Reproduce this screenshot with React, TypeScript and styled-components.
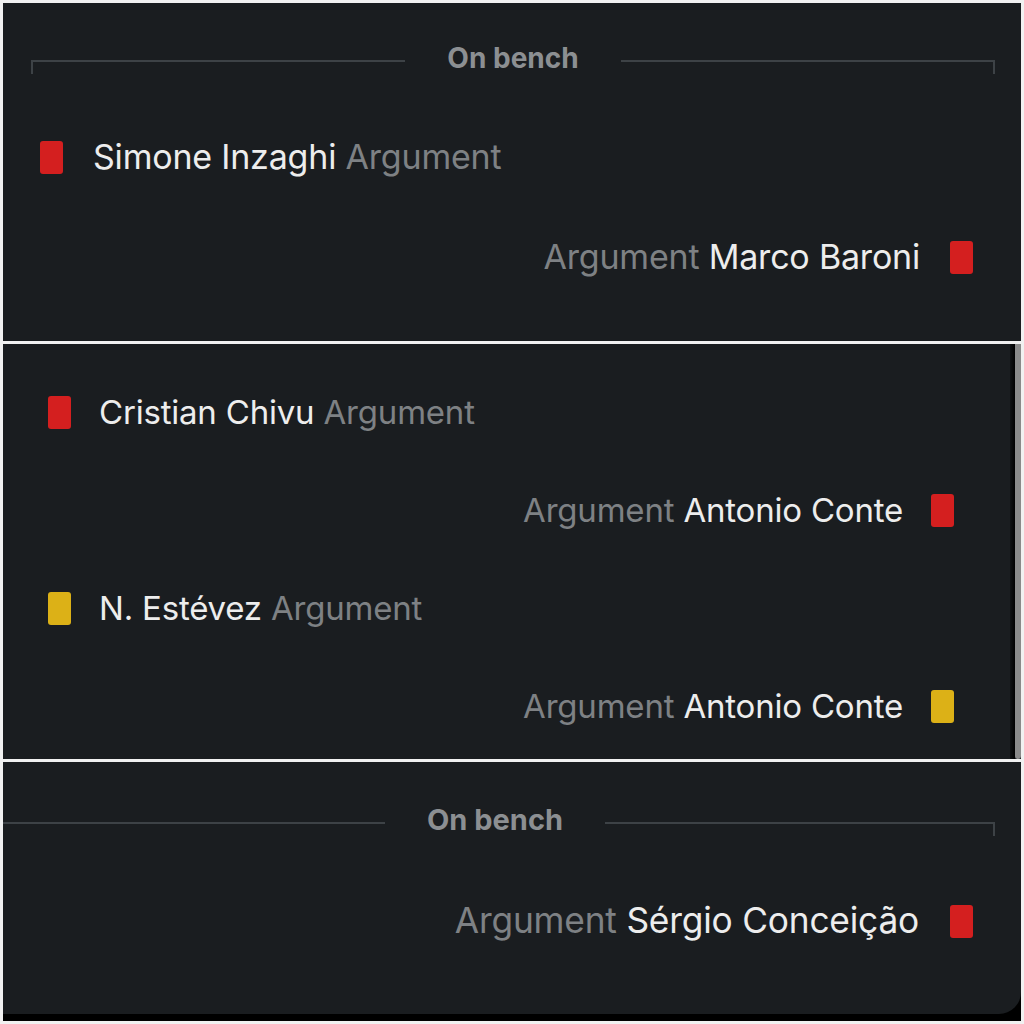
import React from "react";
import styled, { createGlobalStyle } from "styled-components";

const Global = createGlobalStyle`
  html, body { margin: 0; padding: 0; background: #f1f1f1; }
  body { font-family: Inter, "Noto Sans", sans-serif; }
`;

const Page = styled.div`
  width: 1024px;
  height: 1024px;
  box-sizing: border-box;
  padding: 3px 3px 3px 3px;
  display: flex;
  flex-direction: column;
  gap: 3px;
  background: #f1f1f1;
`;

const Panel = styled.section<{ $h: number; $pt: number }>`
  height: ${(p) => p.$h}px;
  box-sizing: border-box;
  padding-top: ${(p) => p.$pt}px;
  background: #1a1d20;
  display: flex;
  flex-direction: column;
  overflow: hidden;
`;

const ScrollPanel = styled.section`
  height: 415px;
  display: flex;
  background: #1a1d20;
`;

const ScrollContent = styled.div`
  flex: 1;
  box-sizing: border-box;
  padding-top: 19px;
  display: flex;
  flex-direction: column;
`;

const ScrollShadow = styled.div`
  width: 5px;
  background: linear-gradient(90deg, #101214, #000);
`;

const ScrollThumb = styled.div`
  width: 6px;
  background: #8a8a8a;
  border-radius: 0 0 3px 3px;
`;

const BottomFrame = styled.div`
  height: 259px;
  background: #000;
  display: flex;
  flex-direction: column;
`;

const BottomPanel = styled.section`
  height: 252px;
  box-sizing: border-box;
  padding-top: 43px;
  background: #1a1d20;
  border-bottom-right-radius: 22px;
  overflow: hidden;
  display: flex;
  flex-direction: column;
`;

const DividerRow = styled.div<{ $ml: number; $mr: number }>`
  height: 30px;
  display: flex;
  align-items: flex-start;
  margin: 0 ${(p) => p.$mr}px 0 ${(p) => p.$ml}px;
`;

const Line = styled.div<{ $side: "left" | "right" }>`
  flex: 1;
  height: 12px;
  margin-top: 17px;
  border-top: 2px solid #3d4246;
  ${(p) =>
    p.$side === "left" ? "border-left: 2px solid #3d4246;" : "border-right: 2px solid #3d4246;"}
`;

const DividerLabel = styled.div<{ $size: number }>`
  padding: 0 42px;
  font-size: ${(p) => p.$size}px;
  font-weight: 700;
  line-height: 30px;
  color: #8c8f92;
`;

const RowList = styled.div<{ $mt: number; $rowH: number }>`
  margin-top: ${(p) => p.$mt}px;
  display: grid;
  grid-auto-rows: ${(p) => p.$rowH}px;
`;

const Row = styled.div<{ $side: "left" | "right"; $pad: number; $size: number; $gap: number }>`
  display: flex;
  align-items: center;
  justify-content: ${(p) => (p.$side === "left" ? "flex-start" : "flex-end")};
  padding: ${(p) => (p.$side === "left" ? `0 0 0 ${p.$pad}px` : `0 ${p.$pad}px 0 0`)};
  gap: ${(p) => p.$gap}px;
  font-size: ${(p) => p.$size}px;
  line-height: 40px;
  letter-spacing: -0.2px;
`;

const Card = styled.span<{ $color: "red" | "yellow" }>`
  width: 23px;
  height: 33px;
  border-radius: 3px;
  flex: none;
  background: ${(p) => (p.$color === "red" ? "#d41f1f" : "#dcb117")};
`;

const Text = styled.span`
  white-space: nowrap;
`;

const Name = styled.span`
  color: #ededed;
`;

const Reason = styled.span`
  color: #7e8184;
`;

type Ev = { side: "left" | "right"; name: string; card: "red" | "yellow" };

function EventRow({ ev, pad, size, gap }: { ev: Ev; pad: number; size: number; gap: number }) {
  return (
    <Row $side={ev.side} $pad={pad} $size={size} $gap={gap}>
      {ev.side === "left" ? (
        <>
          <Card $color={ev.card} />
          <Text>
            <Name>{ev.name}</Name> <Reason>Argument</Reason>
          </Text>
        </>
      ) : (
        <>
          <Text>
            <Reason>Argument</Reason> <Name>{ev.name}</Name>
          </Text>
          <Card $color={ev.card} />
        </>
      )}
    </Row>
  );
}

function Divider({ ml, mr, size }: { ml: number; mr: number; size: number }) {
  return (
    <DividerRow $ml={ml} $mr={mr}>
      <Line $side="left" />
      <DividerLabel $size={size}>On bench</DividerLabel>
      <Line $side="right" />
    </DividerRow>
  );
}

const top: Ev[] = [
  { side: "left", name: "Simone Inzaghi", card: "red" },
  { side: "right", name: "Marco Baroni", card: "red" },
];

const mid: Ev[] = [
  { side: "left", name: "Cristian Chivu", card: "red" },
  { side: "right", name: "Antonio Conte", card: "red" },
  { side: "left", name: "N. Estévez", card: "yellow" },
  { side: "right", name: "Antonio Conte", card: "yellow" },
];

const bottom: Ev[] = [{ side: "right", name: "Sérgio Conceição", card: "red" }];

export default function App() {
  return (
    <>
      <Global />
      <Page>
        <Panel $h={338} $pt={40}>
          <Divider ml={28} mr={26} size={28} />
          <RowList $mt={34} $rowH={100}>
            {top.map((ev, i) => (
              <EventRow
                key={i}
                ev={ev}
                pad={ev.side === "left" ? 37 : 48}
                size={34}
                gap={30}
              />
            ))}
          </RowList>
        </Panel>
        <ScrollPanel>
          <ScrollContent>
            <RowList $mt={0} $rowH={98}>
              {mid.map((ev, i) => (
                <EventRow
                  key={i}
                  ev={ev}
                  pad={ev.side === "left" ? 45 : 56}
                  size={33}
                  gap={28}
                />
              ))}
            </RowList>
          </ScrollContent>
          <ScrollShadow />
          <ScrollThumb />
        </ScrollPanel>
        <BottomFrame>
          <BottomPanel>
            <Divider ml={-8} mr={26} size={29} />
            <RowList $mt={36} $rowH={100}>
              {bottom.map((ev, i) => (
                <EventRow key={i} ev={ev} pad={48} size={35.3} gap={31} />
              ))}
            </RowList>
          </BottomPanel>
        </BottomFrame>
      </Page>
    </>
  );
}
